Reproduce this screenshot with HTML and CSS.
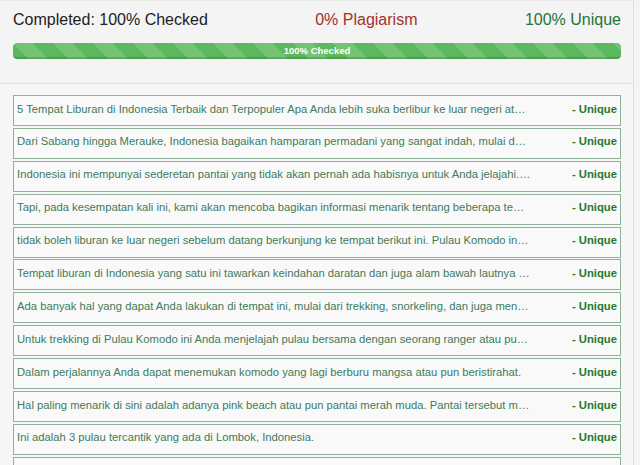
FILE: index.html
```html
<!DOCTYPE html>
<html>
<head>
<meta charset="utf-8">
<link rel="stylesheet" href="styles.css">
</head>
<body>
<div class="wrap">
  <div class="summary">
    <div class="stats">
      <span class="completed">Completed: 100% Checked</span>
      <span class="plag">0% Plagiarism</span>
      <span class="unique">100% Unique</span>
    </div>
    <div class="progress"><div class="bar">100% Checked</div></div>
  </div>
  <div class="list">
    <div class="row"><span class="txt">5 Tempat Liburan di Indonesia Terbaik dan Terpopuler Apa Anda lebih suka berlibur ke luar negeri atau di dalam negeri sendiri?</span><span class="res">- Unique</span></div>
    <div class="row"><span class="txt">Dari Sabang hingga Merauke, Indonesia bagaikan hamparan permadani yang sangat indah, mulai dari pegunungan hingga lautan.</span><span class="res">- Unique</span></div>
    <div class="row"><span class="txt">Indonesia ini mempunyai sederetan pantai yang tidak akan pernah ada habisnya untuk Anda jelajahi. Keindahan alamnya luar biasa.</span><span class="res">- Unique</span></div>
    <div class="row"><span class="txt">Tapi, pada kesempatan kali ini, kami akan mencoba bagikan informasi menarik tentang beberapa tempat liburan terbaik.</span><span class="res">- Unique</span></div>
    <div class="row"><span class="txt">tidak boleh liburan ke luar negeri sebelum datang berkunjung ke tempat berikut ini. Pulau Komodo ini terletak di Nusa Tenggara.</span><span class="res">- Unique</span></div>
    <div class="row"><span class="txt">Tempat liburan di Indonesia yang satu ini tawarkan keindahan daratan dan juga alam bawah lautnya yang memukau.</span><span class="res">- Unique</span></div>
    <div class="row"><span class="txt">Ada banyak hal yang dapat Anda lakukan di tempat ini, mulai dari trekking, snorkeling, dan juga menyelam.</span><span class="res">- Unique</span></div>
    <div class="row"><span class="txt">Untuk trekking di Pulau Komodo ini Anda menjelajah pulau bersama dengan seorang ranger atau pun pemandu.</span><span class="res">- Unique</span></div>
    <div class="row"><span class="txt">Dalam perjalannya Anda dapat menemukan komodo yang lagi berburu mangsa atau pun beristirahat.</span><span class="res">- Unique</span></div>
    <div class="row"><span class="txt">Hal paling menarik di sini adalah adanya pink beach atau pun pantai merah muda. Pantai tersebut memiliki pasir merah.</span><span class="res">- Unique</span></div>
    <div class="row"><span class="txt">Ini adalah 3 pulau tercantik yang ada di Lombok, Indonesia.</span><span class="res">- Unique</span></div>
    <div class="row"><span class="txt">Gili Trawangan, Gili Meno dan Gili Air adalah pulau yang sangat indah.</span><span class="res">- Unique</span></div>
  </div>
</div>
</body>
</html>
```
FILE: styles.css
```css
html, body {
  margin: 0;
  padding: 0;
  background: #f4f4f4;
  font-family: "Liberation Sans", Arial, sans-serif;
  overflow: hidden;
}
.wrap {
  width: 634px;
  border-right: 1px solid #e0e0e0;
  border-top: 1px solid #e8e8e8;
  box-sizing: border-box;
  height: 465px;
  overflow: hidden;
}
.summary {
  padding: 9px 12px 24px 13px;
  border-bottom: 1px solid #dddddd;
}
.stats {
  display: flex;
  justify-content: space-between;
  font-size: 16px;
  line-height: 20px;
}
.completed { color: #222; }
.plag { color: #a3302c; }
.unique { color: #23733c; }
.progress {
  margin-top: 13px;
  height: 16px;
  border-radius: 4px;
  background: #e8e8e8;
  overflow: hidden;
}
.bar {
  height: 100%;
  background-color: #5cb85c;
  background-image: linear-gradient(45deg, rgba(255,255,255,.15) 25%, transparent 25%, transparent 50%, rgba(255,255,255,.15) 50%, rgba(255,255,255,.15) 75%, transparent 75%, transparent);
  background-size: 40px 40px;
  box-shadow: inset 0 -2px 0 rgba(0,0,0,.15);
  color: #fff;
  font-size: 9.5px;
  font-weight: bold;
  text-align: center;
  line-height: 15px;
  border-radius: 4px;
}
.list {
  padding: 11px 12px 0 13px;
  background: #f6f6f6;
}
.row {
  display: flex;
  align-items: center;
  height: 31px;
  box-sizing: border-box;
  margin-bottom: 1.9px;
  border: 1px solid #8fb29a;
  background: #f9f9f9;
  padding: 0 3px 4px 3px;
  font-size: 11.25px;
}
.txt {
  width: 514px;
  white-space: nowrap;
  overflow: hidden;
  text-overflow: ellipsis;
  color: #417a5c;
}
.res {
  flex: 1;
  text-align: right;
  font-weight: bold;
  color: #1f7a32;
}
```
